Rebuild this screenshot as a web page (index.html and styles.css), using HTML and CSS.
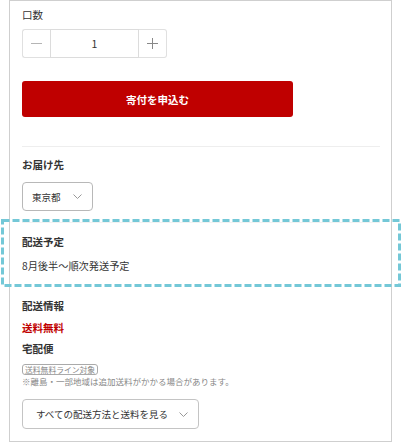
FILE: index.html
```html
<!DOCTYPE html>
<html lang="ja">

<head>
    <meta charset="UTF-8">
    <meta name="viewport" content="width=device-width, initial-scale=1.0">
    <title>寄付の申込み</title>
    <link rel="stylesheet" href="styles.css">
</head>

<body>
    <div class="panel">
        <div class="field-label">口数</div>
        <div class="stepper">
            <button class="step-btn" type="button" aria-label="減らす">
                <svg width="11" height="11" viewBox="0 0 11 11"><path d="M0 5.5h11" stroke="#b5b5b5" stroke-width="1"/></svg>
            </button>
            <input class="step-input" type="text" value="1">
            <button class="step-btn" type="button" aria-label="増やす">
                <svg width="11" height="11" viewBox="0 0 11 11"><path d="M0 5.5h11M5.5 0v11" stroke="#888" stroke-width="1"/></svg>
            </button>
        </div>
        <button class="apply-btn" type="button">寄付を申込む</button>

        <hr class="divider divider-top">

        <div class="field-label">お届け先</div>
        <div class="select-box">
            <span>東京都</span>
            <svg width="9" height="5" viewBox="0 0 9 5"><path d="M0.5 0.5l4 4 4-4" fill="none" stroke="#999" stroke-width="1"/></svg>
        </div>

        <hr class="divider divider-mid">

        <div class="field-label schedule-label">配送予定</div>
        <div class="schedule-text">8月後半～順次発送予定</div>

        <div class="field-label shipping-label">配送情報</div>
        <div class="free-shipping">送料無料</div>
        <div class="field-label carrier-label">宅配便</div>
        <div class="tag">送料無料ライン対象</div>
        <div class="note">※離島・一部地域は追加送料がかかる場合があります。</div>
        <button class="methods-btn" type="button">
            <span>すべての配送方法と送料を見る</span>
            <svg width="9" height="5" viewBox="0 0 9 5"><path d="M0.5 0.5l4 4 4-4" fill="none" stroke="#999" stroke-width="1"/></svg>
        </button>
    </div>

    <!-- 注目枠 -->
    <svg class="highlight" width="400" height="68" viewBox="0 0 400 68">
        <rect x="1.5" y="1.5" width="397" height="65" fill="none" stroke="#74c8d7" stroke-width="3" stroke-dasharray="7 3"/>
    </svg>
</body>

</html>
```

FILE: styles.css
```css
body {
    margin: 0;
    background: #fff;
    font-family: "Noto Sans CJK JP", "Noto Sans", sans-serif;
    color: #333;
    position: relative;
    overflow: hidden;
}

.panel {
    margin-left: 9px;
    width: 383px;
    height: 442px;
    border: 1px solid #cfcfcf;
    padding: 0 11px 0 12px;
    box-sizing: border-box;
}

.field-label {
    font-size: 10.5px;
    line-height: 20px;
    font-weight: bold;
}

.panel > .field-label:first-child {
    font-weight: normal;
    padding-top: 4px;
}

.stepper {
    display: flex;
    width: 145px;
    height: 29px;
    margin-top: 4px;
}

.step-btn {
    width: 28px;
    height: 29px;
    border: 1px solid #e0e0e0;
    background: #fff;
    padding: 0;
    display: flex;
    align-items: center;
    justify-content: center;
    box-sizing: border-box;
}

.step-btn:first-child {
    border-radius: 3px 0 0 3px;
    border-right: none;
}

.step-btn:last-child {
    border-radius: 0 3px 3px 0;
    border-left: none;
}

.step-input {
    width: 89px;
    height: 29px;
    border: 1px solid #dcdcdc;
    box-sizing: border-box;
    text-align: center;
    font-family: inherit;
    font-size: 10.5px;
    color: #333;
    padding: 0;
    outline: none;
}

.apply-btn {
    display: block;
    width: 271px;
    height: 36px;
    margin-top: 23px;
    background: #bf0000;
    border: none;
    border-radius: 3px;
    color: #fff;
    font-family: inherit;
    font-size: 10.5px;
    font-weight: bold;
    padding: 0;
}

.divider {
    border: none;
    height: 1px;
    background: #eee;
    margin: 0;
}

.divider-top {
    margin-top: 29px;
    margin-bottom: 8px;
}

.select-box {
    display: flex;
    align-items: center;
    justify-content: space-between;
    width: 71px;
    height: 29px;
    margin-top: 7px;
    border: 1px solid #b8b8b8;
    border-radius: 4px;
    box-sizing: border-box;
    padding: 0 10px 0 9px;
    font-size: 9.5px;
}

.divider-mid {
    margin-top: 11px;
    background: #f2f2f2;
}

.schedule-label {
    margin-top: 9px;
}

.schedule-text {
    font-size: 10.2px;
    line-height: 20px;
    margin-top: 4px;
}

.shipping-label {
    margin-top: 20px;
}

.free-shipping {
    color: #bf0000;
    font-size: 10.5px;
    font-weight: bold;
    line-height: 20px;
    margin-top: 2px;
}

.carrier-label {
    margin-top: 1px;
}

.tag {
    width: fit-content;
    margin-top: 5px;
    height: 11px;
    line-height: 9px;
    font-size: 7.8px;
    color: #888;
    border: 1px solid #aaa;
    border-radius: 3px;
    padding: 0 2px;
    box-sizing: border-box;
}

.note {
    font-size: 8.5px;
    line-height: 12px;
    color: #888;
}

.methods-btn {
    display: flex;
    align-items: center;
    gap: 11px;
    width: 177px;
    height: 30px;
    margin-top: 12px;
    padding: 0 0 0 13px;
    background: #fff;
    border: 1px solid #c4c4c4;
    border-radius: 4px;
    box-sizing: border-box;
    font-family: inherit;
    font-size: 9.5px;
    color: #333;
}

.highlight {
    position: absolute;
    left: 1px;
    top: 219px;
}
```
